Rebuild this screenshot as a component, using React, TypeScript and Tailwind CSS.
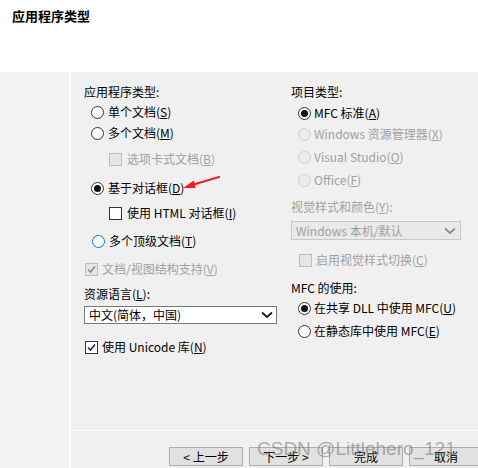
import React from "react";

const FONT = "font-['Noto_Sans_CJK_SC',sans-serif]";

function Radio({ checked, disabled, focus }: { checked?: boolean; disabled?: boolean; focus?: boolean }) {
  const border = disabled ? "border-[#cfcfcf] bg-[#ececec]" : focus ? "border-[#0078d7] bg-white" : "border-[#333333] bg-white";
  return (
    <span className={`w-[13px] h-[13px] rounded-full border flex items-center justify-center shrink-0 ${border}`}>
      {checked && <span className="w-[7px] h-[7px] rounded-full bg-[#111]" />}
    </span>
  );
}

function Check({ checked, disabled }: { checked?: boolean; disabled?: boolean }) {
  const box = disabled ? "border-[#bcbcbc] bg-[#e6e6e6]" : "border-[#333333] bg-white";
  return (
    <span className={`w-[13px] h-[13px] border flex items-center justify-center shrink-0 ${box}`}>
      {checked && (
        <svg width="9" height="9" viewBox="0 0 9 9">
          <path d="M1 4.5 L3.5 7 L8 1.5" fill="none" stroke={disabled ? "#8a8a8a" : "#1a2a5a"} strokeWidth="1.6" />
        </svg>
      )}
    </span>
  );
}

function Label({ text, k, after = "", disabled }: { text: string; k: string; after?: string; disabled?: boolean }) {
  return (
    <span className={`text-[12px] leading-none whitespace-nowrap ${disabled ? "text-[#a0a0a0]" : "text-black"}`}>
      {text}(<u>{k}</u>){after}
    </span>
  );
}

function Chevron({ color }: { color: string }) {
  return (
    <svg width="12" height="8" viewBox="0 0 12 8">
      <path d="M1 1.5 L6 6 L11 1.5" fill="none" stroke={color} strokeWidth="1.8" />
    </svg>
  );
}

function Btn({ children }: { children: React.ReactNode }) {
  return (
    <button className="w-[74px] h-[19px] shrink-0 border border-[#adadad] bg-[#e1e1e1] text-[12px] leading-none text-black flex items-center justify-center">
      {children}
    </button>
  );
}

export default function App() {
  return (
    <div className={`w-[478px] h-[468px] flex flex-col overflow-hidden relative ${FONT}`}>
      {/* header */}
      <div className="h-[72px] shrink-0 bg-white px-[12px] pt-[9px]">
        <div className="text-[13px] font-bold leading-none text-black">应用程序类型</div>
      </div>

      <div className="flex flex-1 min-h-0">
        <div className="w-[69px] shrink-0 bg-[#f3f3f3]" />
        <div className="w-[2px] shrink-0 bg-[#fbfbfb]" />

        <div className="flex-1 min-w-0 overflow-hidden flex flex-col bg-[#f0f0f0]">
          <div className="h-[358px] shrink-0 flex pl-[13px] pt-[10px]">
            {/* left column */}
            <div className="w-[194px] shrink-0 flex flex-col">
              <div className="h-[20px] flex items-center text-[12px] leading-none">应用程序类型:</div>
              <div className="h-[20px] flex items-center gap-[4px] pl-[7px]"><Radio /><Label text="单个文档" k="S" /></div>
              <div className="h-[20px] mt-[1px] flex items-center gap-[4px] pl-[7px]"><Radio /><Label text="多个文档" k="M" /></div>
              <div className="h-[20px] mt-[6px] flex items-center gap-[5px] pl-[25px]"><Check disabled /><Label text="选项卡式文档" k="B" disabled /></div>
              <div className="h-[20px] mt-[9px] flex items-center gap-[4px] pl-[7px]"><Radio checked /><Label text="基于对话框" k="D" /></div>
              <div className="h-[20px] mt-[5px] flex items-center gap-[5px] pl-[25px]"><Check /><Label text="使用 HTML 对话框" k="I" /></div>
              <div className="h-[20px] mt-[8px] flex items-center gap-[4px] pl-[8px]"><Radio focus /><Label text="多个顶级文档" k="T" /></div>
              <div className="h-[20px] mt-[8px] flex items-center gap-[4px] pl-[1px]"><Check checked disabled /><Label text="文档/视图结构支持" k="V" disabled /></div>
              <div className="h-[20px] mt-[5px] flex items-center"><Label text="资源语言" k="L" after=":" /></div>
              <div className="h-[18px] mt-[2px] w-[193px] bg-white border border-[#7a7a7a] flex items-center justify-between pl-[4px] pr-[3px]">
                <span className="text-[12px] leading-none">中文(简体，中国)</span>
                <Chevron color="#1a1a2a" />
              </div>
              <div className="h-[20px] mt-[13px] flex items-center gap-[4px] pl-[1px]"><Check checked /><Label text="使用 Unicode 库" k="N" /></div>
            </div>

            {/* right column */}
            <div className="ml-[13px] w-[170px] shrink-0 flex flex-col">
              <div className="h-[20px] flex items-center text-[12px] leading-none">项目类型:</div>
              <div className="h-[20px] mt-[1px] flex items-center gap-[3px] pl-[7px]"><Radio checked /><Label text="MFC 标准" k="A" /></div>
              <div className="h-[20px] mt-[1px] flex items-center gap-[3px] pl-[7px]"><Radio disabled /><Label text="Windows 资源管理器" k="X" disabled /></div>
              <div className="h-[20px] mt-[3px] flex items-center gap-[3px] pl-[7px]"><Radio disabled /><Label text="Visual Studio" k="O" disabled /></div>
              <div className="h-[20px] mt-[3px] flex items-center gap-[3px] pl-[7px]"><Radio disabled /><Label text="Office" k="F" disabled /></div>
              <div className="h-[20px] mt-[7px] flex items-center"><Label text="视觉样式和颜色" k="Y" after=":" disabled /></div>
              <div className="h-[19px] mt-[4px] w-[170px] bg-[#e9e9e9] border border-[#c8c8c8] flex items-center justify-between pl-[4px] pr-[4px]">
                <span className="text-[12px] leading-none text-[#a0a0a0]">Windows 本机/默认</span>
                <Chevron color="#8a8a8a" />
              </div>
              <div className="h-[20px] mt-[10px] flex items-center gap-[4px] pl-[8px]"><Check disabled /><Label text="启用视觉样式切换" k="C" disabled /></div>
              <div className="h-[20px] mt-[8px] flex items-center text-[12px] leading-none">MFC 的使用:</div>
              <div className="h-[20px] flex items-center gap-[3px] pl-[7px]"><Radio checked /><Label text="在共享 DLL 中使用 MFC" k="U" /></div>
              <div className="h-[20px] mt-[3px] flex items-center gap-[3px] pl-[7px]"><Radio /><Label text="在静态库中使用 MFC" k="E" /></div>
            </div>
          </div>

          <div className="h-px shrink-0 bg-[#fcfcfc]" />

          <div className="flex-1 flex items-start pt-[16px] pl-[98px] gap-[6px]">
            <Btn>&lt; 上一步</Btn>
            <Btn>下一步 &gt;</Btn>
            <Btn>完成</Btn>
            <Btn>取消</Btn>
          </div>
        </div>
      </div>

      {/* red annotation arrow */}
      <svg className="absolute left-[180px] top-[172px]" width="42" height="22" viewBox="0 0 42 22">
        <path d="M39 5 L12 13" stroke="#f21d1d" strokeWidth="2.2" strokeLinecap="round" />
        <path d="M3 16 L14 8.5 L15.5 16 Z" fill="#f21d1d" />
      </svg>

      {/* watermark */}
      <div className="absolute left-[257px] top-[439px] text-[19px] leading-none text-[#7a7a7a]/60 font-['Liberation_Sans',sans-serif] whitespace-nowrap pointer-events-none">
        CSDN @Littlehero_121
      </div>
    </div>
  );
}
